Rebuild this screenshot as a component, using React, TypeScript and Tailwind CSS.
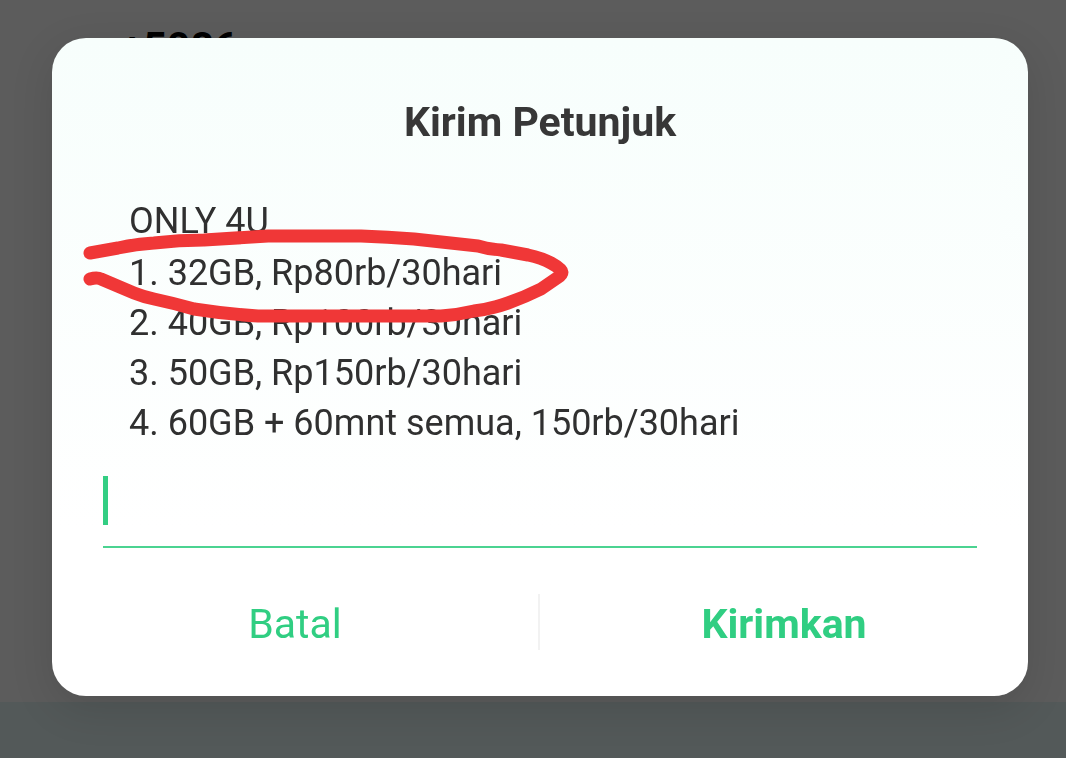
const packages = [
  "1. 32GB, Rp80rb/30hari",
  "2. 40GB, Rp100rb/30hari",
  "3. 50GB, Rp150rb/30hari",
  "4. 60GB + 60mnt semua, 150rb/30hari",
];

const Scribble = () => {
  return (
    <svg
      className="absolute -left-12 -top-6 pointer-events-none"
      width="500"
      height="110"
      viewBox="80 224 500 110"
      fill="none"
      stroke="#f03737"
      strokeWidth="13"
      strokeLinecap="round"
      strokeLinejoin="round"
      aria-hidden="true"
    >
      <path d="M89 253L117 248Q135 244 153 243Q178 240 203 240L267 236H360Q387 237 413 239L477 246Q487 249 500 250L527 255Q541 258 550 263Q561 269 561 272Q561 275 556 278L540 289Q524 297 507 303Q490 309 473 311Q456 315 440 316H257Q225 314 193 309Q172 303 153 299Q143 297 133 293L100 279Q96 277 89 279" />
    </svg>
  );
};

const Dialog = () => {
  return (
    <form
      role="dialog"
      aria-labelledby="title"
      className="relative w-full rounded-[34px] bg-white bg-linear-to-b from-[#f7fefc] to-white to-75% px-[51px] pb-[46px] pt-15 shadow-[0_12px_44px_rgba(0,0,0,0.12)]"
    >
      <h1
        id="title"
        className="text-center text-[41px] leading-[48px] font-bold text-[#373737]"
      >
        Kirim Petunjuk
      </h1>

      <div className="mt-[50px] pl-[26px] text-[36px] leading-[50px] text-[#303030]">
        <p>ONLY 4U</p>
        <div className="relative mt-0.5">
          <ol>
            {packages.map((item) => (
              <li key={item}>{item}</li>
            ))}
          </ol>
          <Scribble />
        </div>
      </div>

      <div className="relative mt-6">
        <input
          type="text"
          aria-label="Kirim Petunjuk"
          className="block h-[76px] w-full border-b-2 border-[#4bd391] bg-transparent text-[36px] text-[#303030] caret-transparent outline-none"
        />
        <span className="absolute left-0 top-1 h-[49px] w-[5px] bg-[#33ce83]"></span>
      </div>

      <div className="-mx-[51px] mt-[46px] grid h-14 grid-cols-2 divide-x-2 divide-[#f2f2f2] text-[41px] leading-[48px] text-[#30ce82]">
        <button type="button" className="pt-1">
          Batal
        </button>
        <button type="submit" className="pt-1 font-bold">
          Kirimkan
        </button>
      </div>
    </form>
  );
};

const App = () => {
  return (
    <main className="flex h-screen flex-col overflow-hidden bg-[#5c5c5c] font-[Roboto,sans-serif]">
      <div className="flex-1 pl-[121px] pt-[22px]">
        <p className="text-[41px] leading-[50px] font-bold text-black">+5086</p>
      </div>
      <div className="h-14 bg-[#535959]"></div>

      <div className="fixed inset-0 flex items-start pl-[52px] pr-[38px] pt-[38px]">
        <Dialog />
      </div>
    </main>
  );
};

export default App;
